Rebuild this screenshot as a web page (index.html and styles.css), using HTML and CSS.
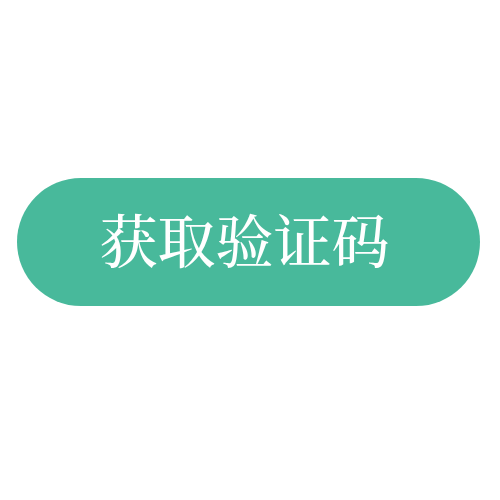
FILE: index.html
```html
<!DOCTYPE html>
<html lang="zh-CN">
<head>
<meta charset="utf-8">
<link rel="stylesheet" href="styles.css">
</head>
<body>
<div class="page">
  <button class="code-btn" type="button">获取验证码</button>
</div>
</body>
</html>
```
FILE: styles.css
```css
html, body {
  margin: 0;
  padding: 0;
  background: #ffffff;
}
.page {
  width: 500px;
  height: 500px;
  display: flex;
  align-items: flex-start;
  padding: 178px 0 0 17px;
  box-sizing: border-box;
}
.code-btn {
  width: 463px;
  height: 128px;
  border: none;
  border-radius: 64px;
  background: #48b99b;
  color: #ffffff;
  font-family: "Noto Serif CJK SC", "Noto Sans CJK SC", serif;
  font-size: 58px;
  font-weight: 500;
  line-height: 1;
  padding: 0 8px 8px 0;
  display: flex;
  align-items: center;
  justify-content: center;
}
```
